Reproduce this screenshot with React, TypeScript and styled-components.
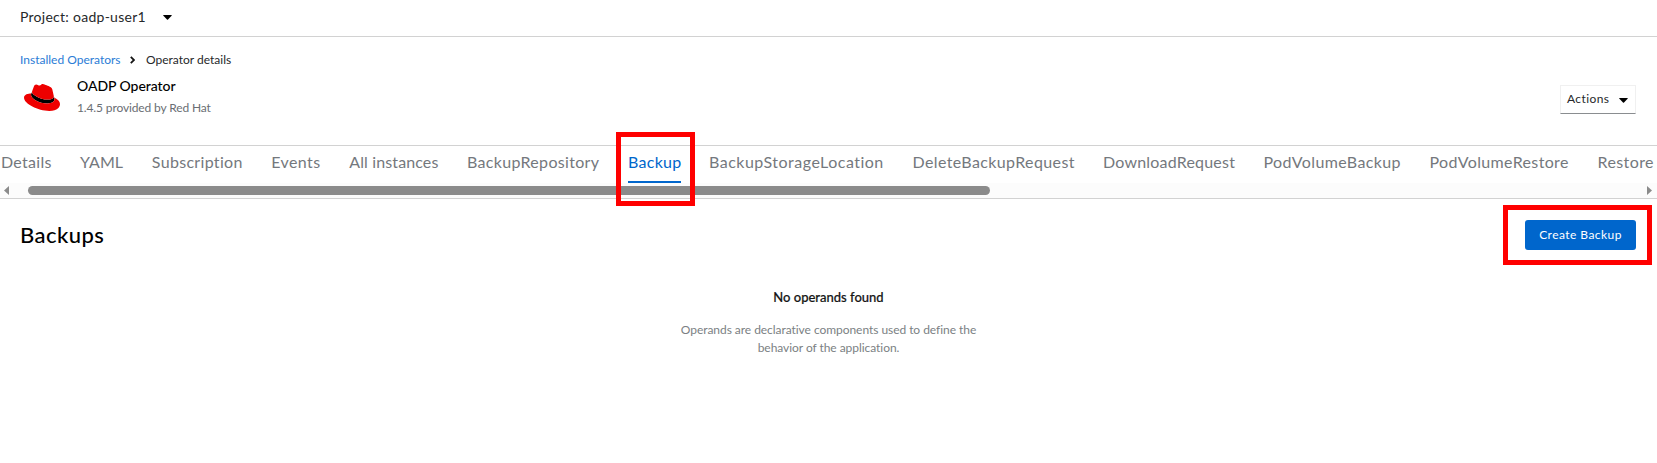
import React from 'react';
import styled, { createGlobalStyle } from 'styled-components';

const GlobalStyle = createGlobalStyle`
  * { box-sizing: border-box; }
  body {
    margin: 0;
    background: #fff;
    color: #26282a;
    font-family: Lato, "Liberation Sans", sans-serif;
    font-size: 12px;
    line-height: 18px;
    overflow: hidden;
  }
  h1, h2, h3, p { margin: 0; }
`;

const Page = styled.main`
  height: 463px;
  overflow: hidden;
`;

const ProjectBar = styled.div`
  display: flex;
  align-items: center;
  gap: 17px;
  height: 37px;
  padding: 0 21px 3px 20px;
  border-bottom: 1px solid #d2d2d2;
  font-size: 14px;
  letter-spacing: 0.27px;
`;

const CaretIcon = styled.svg`
  display: block;
  flex: none;
  margin-top: 2px;
  fill: #000;
`;

const Caret = () => (
  <CaretIcon width="9" height="5" viewBox="0 0 9 5">
    <path d="M0.7 0h7.6q.9 0 .3.7L5 4.6q-.5.5-1 0L.4.7Q-.2 0 .7 0Z" />
  </CaretIcon>
);

const OperatorHeader = styled.header`
  height: 109px;
  padding: 13px 21px 0 20px;
  border-bottom: 1px solid #d2d2d2;
`;

const Breadcrumb = styled.nav`
  display: flex;
  align-items: center;
  height: 20px;
`;

const CrumbLink = styled.a`
  color: #2b7cd6;
  width: 110px;
`;

const CrumbArrow = styled.svg`
  display: block;
  margin-right: 11px;
`;

const HeaderRow = styled.div`
  display: flex;
  justify-content: space-between;
  padding-top: 5px;
`;

const Identity = styled.div`
  display: flex;
`;

const Hat = styled.svg`
  display: block;
  margin: 9px 17px 0 4px;
`;

const OperatorName = styled.h1`
  font-size: 14px;
  line-height: 21px;
  font-weight: 500;
  color: #000;
  letter-spacing: -0.05px;
`;

const Provider = styled.p`
  margin-top: 3px;
  color: #6a6e73;
  letter-spacing: -0.13px;
`;

const ActionsButton = styled.button`
  display: flex;
  align-items: center;
  justify-content: space-between;
  width: 76px;
  height: 29px;
  margin-top: 10px;
  padding: 0 7px 1px 6px;
  border: 1px solid #f0f0f0;
  border-bottom-color: #8a8d90;
  background: #fff;
  color: #26282a;
  font: inherit;
  letter-spacing: 0.4px;
`;

const TabStrip = styled.nav`
  height: 53px;
  border-bottom: 1px solid #d2d2d2;
`;

const TabList = styled.div`
  display: flex;
  gap: 28px;
  height: 37px;
  padding-left: 1px;
`;

const Tab = styled.a<{ $width: number; $spacing: number; $active?: boolean }>`
  flex: none;
  width: ${(p) => p.$width}px;
  height: 37px;
  padding-top: 4px;
  font-size: 16px;
  line-height: 24px;
  letter-spacing: ${(p) => p.$spacing}px;
  white-space: nowrap;
  color: ${(p) => (p.$active ? '#06c' : '#74787d')};
  border-bottom: 2px solid ${(p) => (p.$active ? '#06c' : 'transparent')};
`;

const ScrollTrack = styled.div`
  display: flex;
  align-items: center;
  height: 15px;
  padding: 0 5px 0 4px;
  background: #fcfcfc;
`;

const ScrollArrow = styled.svg`
  display: block;
  fill: #8b8b8b;
`;

const ScrollThumb = styled.div`
  width: 962px;
  height: 9px;
  margin: 0 auto 0 19px;
  border-radius: 5px;
  background: #8b8b8b;
`;

const ListHeader = styled.div`
  display: flex;
  justify-content: space-between;
  height: 88px;
  padding: 20px 21px 0 20px;
`;

const ListTitle = styled.h2`
  font-size: 22px;
  line-height: 32px;
  font-weight: 500;
  color: #000;
  letter-spacing: 0.45px;
`;

const PrimaryButton = styled.button`
  width: 111px;
  height: 30px;
  margin-top: 1px;
  padding: 0 0 1px;
  border: 0;
  border-radius: 3px;
  background: #06c;
  color: #fff;
  font: inherit;
  letter-spacing: 0.45px;
`;

const EmptyState = styled.section`
  text-align: center;
  color: #7b7f83;
`;

const EmptyTitle = styled.h3`
  margin-bottom: 14px;
  font-size: 13px;
  line-height: 20px;
  font-weight: 500;
  color: #151515;
  -webkit-text-stroke: 0.2px;
`;

const EmptyText = styled.p`
  letter-spacing: -0.05px;
`;

const Highlight = styled.div<{ $x: number; $y: number; $w: number; $h: number }>`
  position: absolute;
  left: ${(p) => p.$x}px;
  top: ${(p) => p.$y}px;
  width: ${(p) => p.$w}px;
  height: ${(p) => p.$h}px;
  border: 5px solid #f00;
  pointer-events: none;
`;

const tabs: { label: string; width: number; spacing: number }[] = [
  { label: 'Details', width: 51, spacing: 0.28 },
  { label: 'YAML', width: 43.8, spacing: 0.1 },
  { label: 'Subscription', width: 91.5, spacing: 0.32 },
  { label: 'Events', width: 50, spacing: 0.4 },
  { label: 'All instances', width: 89.7, spacing: 0.12 },
  { label: 'BackupRepository', width: 133, spacing: 0.32 },
  { label: 'Backup', width: 53, spacing: 0.28 },
  { label: 'BackupStorageLocation', width: 175.5, spacing: 0.49 },
  { label: 'DeleteBackupRequest', width: 162.5, spacing: 0.38 },
  { label: 'DownloadRequest', width: 132.5, spacing: 0.2 },
  { label: 'PodVolumeBackup', width: 138, spacing: 0.38 },
  { label: 'PodVolumeRestore', width: 140, spacing: 0.36 },
  { label: 'Restore', width: 57, spacing: 0.4 },
];

export default function App() {
  return (
    <Page>
      <GlobalStyle />
      <ProjectBar>
        <span>Project: oadp-user1</span>
        <Caret />
      </ProjectBar>
      <OperatorHeader>
        <Breadcrumb>
          <CrumbLink>Installed Operators</CrumbLink>
          <CrumbArrow width="5" height="8" viewBox="0 0 5 8">
            <path d="M.8.8 4 4 .8 7.2" fill="none" stroke="#151515" strokeWidth="1.8" />
          </CrumbArrow>
          <span>Operator details</span>
        </Breadcrumb>
        <HeaderRow>
          <Identity>
            <Hat width="36" height="27" viewBox="0 62 512 388" preserveAspectRatio="none">
              <path d="M429 254.84c4.65 22 4.65 24.35 4.65 27.25 0 37.66-42.33 58.56-98 58.56-125.74.08-235.91-73.65-235.91-122.33a49.55 49.55 0 0 1 4.06-19.72L113 179.45c0 24.8 97.64 106.11 228.47 106.11 33.65 0 82.34-6.94 82.34-47Z" />
              <path
                fill="#e00"
                d="M341.52 285.56c33.65 0 82.34-6.94 82.34-47 .22-6.74.86-1.82-20.88-96.24-4.62-19.15-8.68-27.84-42.31-44.65-26.09-13.34-82.92-35.37-99.73-35.37-15.66 0-20.2 20.17-38.87 20.17-18 0-31.31-15.06-48.12-15.06-16.14 0-26.66 11-34.78 33.62-27.5 77.55-26.28 74.27-26.12 78.27 0 24.8 97.64 106.26 228.47 106.26M429 254.84c4.65 22 4.65 24.35 4.65 27.25 0 37.66-42.33 58.56-98 58.56-125.74.08-235.91-73.65-235.91-122.33a49.55 49.55 0 0 1 4.06-19.72C58.56 200.86 0 208.93 0 260.63c0 84.67 200.63 189 359.49 189 121.79 0 152.51-55.08 152.51-98.58 0-34.21-29.59-73.05-82.93-96.24"
              />
            </Hat>
            <div>
              <OperatorName>OADP Operator</OperatorName>
              <Provider>1.4.5 provided by Red Hat</Provider>
            </div>
          </Identity>
          <ActionsButton>
            Actions
            <Caret />
          </ActionsButton>
        </HeaderRow>
      </OperatorHeader>
      <TabStrip>
        <TabList>
          {tabs.map((t) => (
            <Tab key={t.label} $width={t.width} $spacing={t.spacing} $active={t.label === 'Backup'}>
              {t.label}
            </Tab>
          ))}
        </TabList>
        <ScrollTrack>
          <ScrollArrow width="5" height="9" viewBox="0 0 5 9">
            <path d="M5 0v9L0 4.5Z" />
          </ScrollArrow>
          <ScrollThumb />
          <ScrollArrow width="5" height="9" viewBox="0 0 5 9">
            <path d="M0 0v9l5-4.5Z" />
          </ScrollArrow>
        </ScrollTrack>
      </TabStrip>
      <ListHeader>
        <ListTitle>Backups</ListTitle>
        <PrimaryButton>Create Backup</PrimaryButton>
      </ListHeader>
      <EmptyState>
        <EmptyTitle>No operands found</EmptyTitle>
        <EmptyText>
          Operands are declarative components used to define the
          <br />
          behavior of the application.
        </EmptyText>
      </EmptyState>
      <Highlight $x={616} $y={132} $w={79} $h={74} />
      <Highlight $x={1503} $y={205} $w={149} $h={60} />
    </Page>
  );
}
